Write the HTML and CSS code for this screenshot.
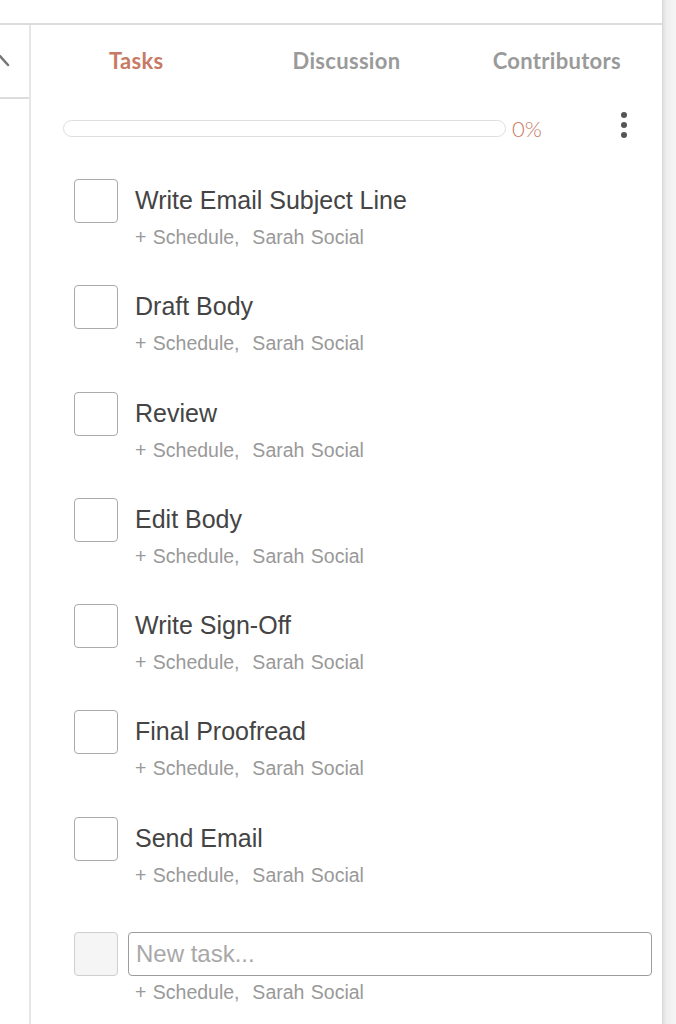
FILE: index.html
```html
<!DOCTYPE html>
<html lang="en">
<head>
    <meta charset="UTF-8">
    <meta name="viewport" content="width=device-width, initial-scale=1.0">
    <link rel="stylesheet" href="styles.css">
</head>
<body>
    <div class="topbar"></div>

    <div class="layout">
        <div class="side">
            <div class="side-head">
                <svg class="side-icon" width="10" height="14" viewBox="0 0 10 14">
                    <path d="M0 2 L8 11" stroke="#777" stroke-width="2.5" stroke-linecap="round"/>
                </svg>
            </div>
        </div>

        <div class="panel">
            <div class="tabs">
                <div class="tab active">Tasks</div>
                <div class="tab">Discussion</div>
                <div class="tab">Contributors</div>
            </div>

            <div class="progress-row">
                <div class="progress"><div class="progress-fill" style="width: 0%"></div></div>
                <span class="percent">0%</span>
                <div class="kebab"><span></span><span></span><span></span></div>
            </div>

            <ul class="tasks">
                <li class="task">
                    <div class="check"></div>
                    <div class="task-body">
                        <div class="task-title">Write Email Subject Line</div>
                        <div class="task-meta">+ Schedule,&nbsp; Sarah Social</div>
                    </div>
                </li>
                <li class="task">
                    <div class="check"></div>
                    <div class="task-body">
                        <div class="task-title">Draft Body</div>
                        <div class="task-meta">+ Schedule,&nbsp; Sarah Social</div>
                    </div>
                </li>
                <li class="task">
                    <div class="check"></div>
                    <div class="task-body">
                        <div class="task-title">Review</div>
                        <div class="task-meta">+ Schedule,&nbsp; Sarah Social</div>
                    </div>
                </li>
                <li class="task">
                    <div class="check"></div>
                    <div class="task-body">
                        <div class="task-title">Edit Body</div>
                        <div class="task-meta">+ Schedule,&nbsp; Sarah Social</div>
                    </div>
                </li>
                <li class="task">
                    <div class="check"></div>
                    <div class="task-body">
                        <div class="task-title">Write Sign-Off</div>
                        <div class="task-meta">+ Schedule,&nbsp; Sarah Social</div>
                    </div>
                </li>
                <li class="task">
                    <div class="check"></div>
                    <div class="task-body">
                        <div class="task-title">Final Proofread</div>
                        <div class="task-meta">+ Schedule,&nbsp; Sarah Social</div>
                    </div>
                </li>
                <li class="task">
                    <div class="check"></div>
                    <div class="task-body">
                        <div class="task-title">Send Email</div>
                        <div class="task-meta">+ Schedule,&nbsp; Sarah Social</div>
                    </div>
                </li>
            </ul>

            <div class="new-task">
                <div class="check disabled"></div>
                <div class="new-body">
                    <input class="new-input" type="text" placeholder="New task...">
                    <div class="task-meta new-meta">+ Schedule,&nbsp; Sarah Social</div>
                </div>
            </div>
        </div>

        <div class="edge"></div>
    </div>
</body>
</html>
```

FILE: styles.css
```css
body {
    margin: 0;
    font-family: "Liberation Sans", Arial, sans-serif;
    background-color: #ffffff;
    overflow: hidden;
}
.topbar {
    height: 23px;
    width: 662px;
    border-bottom: 2px solid #dcdcdc;
}
.layout {
    display: flex;
    height: 999px;
}
.side {
    width: 29px;
    border-right: 2px solid #e6e6e6;
}
.side-head {
    height: 72px;
    border-bottom: 2px solid #dcdcdc;
    display: flex;
    align-items: flex-start;
}
.side-icon {
    margin-top: 29px;
}
.panel {
    width: 631px;
    display: flex;
    flex-direction: column;
}
.tabs {
    display: grid;
    grid-template-columns: 1fr 1fr 1fr;
    padding-top: 22px;
}
.tab {
    text-align: center;
    font-family: Lato, sans-serif;
    font-weight: 700;
    font-size: 22px;
    color: #9a9a9a;
    letter-spacing: 0.3px;
}
.tab.active {
    color: #c77a64;
}
.progress-row {
    display: flex;
    align-items: center;
    margin-top: 41px;
    padding-left: 32px;
}
.progress {
    width: 441px;
    height: 15px;
    border: 1px solid #dedede;
    border-radius: 9px;
    background: #fff;
}
.progress-fill {
    height: 100%;
    background: #c77a64;
    border-radius: 9px;
}
.percent {
    margin-left: 6px;
    font-family: Lato, sans-serif;
    font-weight: 300;
    font-size: 22px;
    color: #c77a64;
}
.kebab {
    display: flex;
    flex-direction: column;
    gap: 4px;
    margin-left: 79px;
    margin-top: -8px;
}
.kebab span {
    width: 6px;
    height: 6px;
    border-radius: 50%;
    background: #555;
}
.tasks {
    list-style: none;
    margin: 37px 0 0 0;
    padding: 0 0 0 43px;
}
.task {
    display: flex;
    height: 106.3px;
}
.check {
    width: 42px;
    height: 42px;
    border: 1px solid #aaaaaa;
    border-radius: 4px;
    flex-shrink: 0;
    background: #fff;
}
.check.disabled {
    background: #f5f5f5;
    border-color: #cfcfcf;
}
.task-body {
    margin-left: 17px;
    padding-top: 6px;
}
.task-title {
    font-size: 25px;
    color: #444;
    line-height: 30px;
}
.task-meta {
    margin-top: 11px;
    font-size: 19.5px;
    line-height: 22px;
    word-spacing: 1px;
    color: #999;
}
.new-task {
    display: flex;
    padding-left: 43px;
    margin-top: 9px;
}
.new-body {
    margin-left: 10px;
}
.new-input {
    display: block;
    width: 524px;
    height: 44px;
    box-sizing: border-box;
    border: 1px solid #9c9c9c;
    border-radius: 4px;
    padding: 0 7px;
    font-family: "Liberation Sans", Arial, sans-serif;
    font-size: 24px;
    color: #444;
    outline: none;
}
.new-input::placeholder {
    color: #a8a8a8;
}
.new-meta {
    margin-top: 5px;
    margin-left: 7px;
}
.edge {
    width: 14px;
    background: linear-gradient(to right, #d8d8d8, #eeeeee 30%, #f6f6f6);
    margin-top: -25px;
}
```
